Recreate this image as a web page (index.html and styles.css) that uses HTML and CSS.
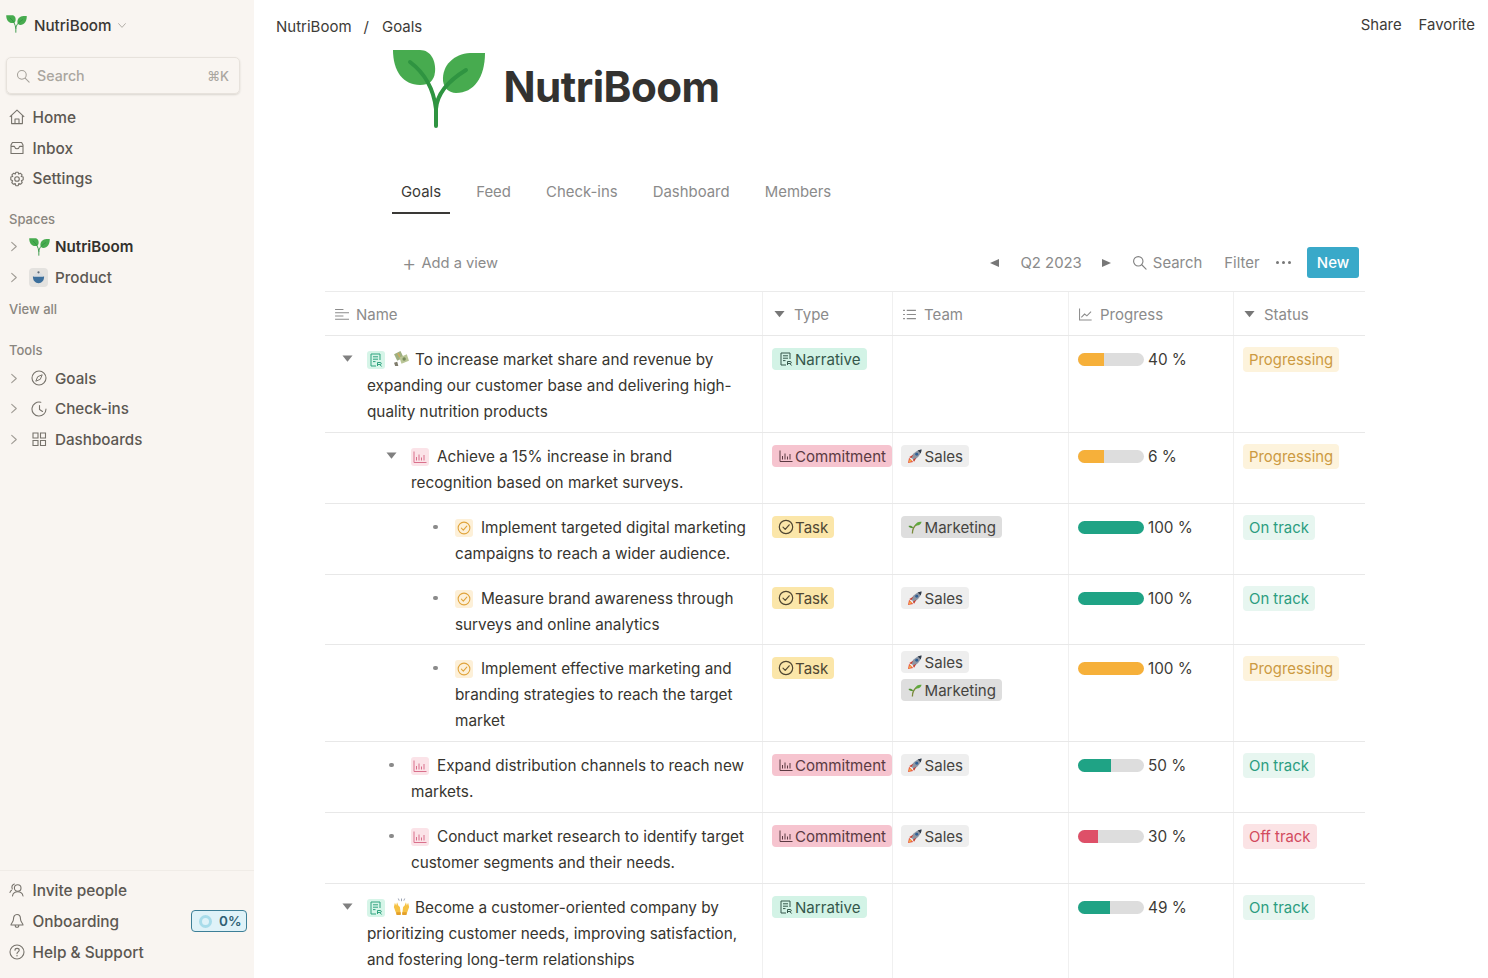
FILE: index.html
```html
<!DOCTYPE html>
<html lang="en">
<head>
<meta charset="utf-8">
<title>NutriBoom Goals</title>
<link rel="stylesheet" href="styles.css">
</head>
<body>
<svg class="defs" aria-hidden="true">
  <symbol id="logo" viewBox="0 0 94 80">
    <path fill="#47ab4f" d="M1 1H28C39 1 44 12 43 23C42 32 37 36 28 36C11 36 1 22 1 1Z"/>
    <path fill="#47ab4f" d="M93 4C93 28 82 44 64 44C57 44 52 39 51 32C50 16 62 5 78 4Z"/>
    <path fill="none" stroke="#2f9441" stroke-width="4" stroke-linecap="round" d="M44 77V60C42 43 34 25 18 13M44 60C45 44 56 32 74 21"/>
  </symbol>
  <symbol id="search" viewBox="0 0 16 16"><circle cx="6.7" cy="6.7" r="5" fill="none" stroke="currentColor" stroke-width="1.2"/><path d="M10.4 10.4L15 15" stroke="currentColor" stroke-width="1.2" stroke-linecap="round"/></symbol>
  <symbol id="home" viewBox="0 0 16 16"><path fill="none" stroke="currentColor" stroke-width="1.1" stroke-linejoin="round" d="M.8 7.8L8 1.2l7.2 6.6M2.6 6.4V14.6H13.4V6.4M6 14.6V10H10V14.6"/></symbol>
  <symbol id="inbox" viewBox="0 0 16 16"><path fill="none" stroke="currentColor" stroke-width="1.1" stroke-linejoin="round" d="M3.4 2.5H12.6L14 5V13.5H2V5ZM2 6.4H5.4C5.8 8 6.8 8.8 8 8.8S10.200 8 10.600 6.4H14"/></symbol>
  <symbol id="gear" viewBox="0 0 16 16"><circle cx="8" cy="8" r="2.300" fill="none" stroke="currentColor" stroke-width="1.100"/><path fill="none" stroke="currentColor" stroke-width="1.100" stroke-linejoin="round" d="M6.800 1.300H9.200L9.700 3.100L11.300 2.200L13.100 3.900L12.200 5.500L14.200 6V8.700L12.400 9.700L13.200 11.500L11.500 13.300L9.800 12.500L9.200 14.700H6.800L6.200 12.500L4.500 13.300L2.800 11.500L3.600 9.700L1.800 8.700V6L3.800 5.500L2.900 3.900L4.700 2.200L6.300 3.100Z"/></symbol>
  <symbol id="chev" viewBox="0 0 8 12"><path fill="none" stroke="currentColor" stroke-width="1.200" stroke-linecap="round" stroke-linejoin="round" d="M1.500 1.500L6.500 6L1.500 10.500"/></symbol>
  <symbol id="compass" viewBox="0 0 16 16"><circle cx="8" cy="8" r="7" fill="none" stroke="currentColor" stroke-width="1.100"/><path fill="none" stroke="currentColor" stroke-width="1" stroke-linejoin="round" d="M11.200 4.800L9.300 9.300L4.800 11.200L6.700 6.700Z"/></symbol>
  <symbol id="clock" viewBox="0 0 16 16"><path fill="none" stroke="currentColor" stroke-width="1.100" stroke-linecap="round" d="M9.800 1.300A7 7 0 1 0 15 8M8.500 4.500V8.500L11.500 10.500"/></symbol>
  <symbol id="grid" viewBox="0 0 16 16"><path fill="none" stroke="currentColor" stroke-width="1.100" d="M2 2H7V7H2ZM9.500 2H14.500V7H9.500ZM2 9.500H7V14.500H2ZM9.500 9.500H14.500V14.500H9.500Z"/></symbol>
  <symbol id="people" viewBox="0 0 16 16"><circle cx="8.700" cy="6" r="3.300" fill="none" stroke="currentColor" stroke-width="1.100"/><path fill="none" stroke="currentColor" stroke-width="1.100" stroke-linecap="round" d="M3.500 14C4 11 6 9.800 8.700 9.800S13.400 11 14 14M5.300 2C3 3 2.500 5 3.300 7M1 10.500C1.200 9.500 1.800 8.800 2.500 8.300"/></symbol>
  <symbol id="bell" viewBox="0 0 16 16"><path fill="none" stroke="currentColor" stroke-width="1.100" stroke-linejoin="round" d="M8 1.500C10.500 1.500 11.500 3.500 11.500 6C11.500 9 14 10.500 14 12H2C2 10.500 4.500 9 4.500 6C4.500 3.500 5.500 1.500 8 1.500ZM6.200 12.200C6.200 15 9.800 15 9.800 12.200"/></symbol>
  <symbol id="help" viewBox="0 0 16 16"><circle cx="8" cy="8" r="7" fill="none" stroke="currentColor" stroke-width="1.100"/><path fill="none" stroke="currentColor" stroke-width="1.100" stroke-linecap="round" d="M6 6.200C6 3.800 10.200 3.800 10.200 6.200C10.200 7.900 8 7.800 8 9.600"/><circle cx="8" cy="11.700" r=".7" fill="currentColor"/></symbol>
  <symbol id="lines" viewBox="0 0 16 14"><path stroke="currentColor" stroke-width="1.100" d="M0 1.500H9M0 5H15M0 8.500H9M0 12H15"/></symbol>
  <symbol id="list" viewBox="0 0 14 12"><path stroke="currentColor" stroke-width="1.100" d="M0 1.500H2M4 1.500H14M0 6H2M4 6H14M0 10.500H2M4 10.500H14"/></symbol>
  <symbol id="graph" viewBox="0 0 14 14"><path fill="none" stroke="currentColor" stroke-width="1.100" d="M.6 .6V13H13.600M2.500 10L6 6.500L8.500 8.500L13 4"/></symbol>
  <symbol id="down" viewBox="0 0 12 8"><path fill="currentColor" d="M.5 .8H11.500L6 7.500Z"/></symbol>
  <symbol id="doc" viewBox="0 0 14 14"><path fill="none" stroke="currentColor" stroke-width="1" d="M2 1H11V7M2 1V13H7M4 3.800H9M4 6.200H9M4 8.600H6.500"/><path fill="none" stroke="currentColor" stroke-width="1" d="M8.500 13V9.500H11.200C12.700 9.500 12.700 11.500 11.200 11.500H8.500M10.800 11.500L12.600 13.500"/></symbol>
  <symbol id="bars" viewBox="0 0 14 14"><path fill="none" stroke="currentColor" stroke-width="1" d="M1 1.500V12.500H13.500M3.500 10.500V7M6 10.500V4.500M8.500 10.500V7.500M11 10.500V5"/></symbol>
  <symbol id="check" viewBox="0 0 16 16"><circle cx="8" cy="8" r="6.700" fill="none" stroke="currentColor" stroke-width="1.200"/><path fill="none" stroke="currentColor" stroke-width="1.200" stroke-linecap="round" stroke-linejoin="round" d="M5 8.200L7.200 10.400L11.200 5.800"/></symbol>
  <symbol id="rocket" viewBox="0 0 16 16"><path fill="#e8503f" d="M0 16L1.200 10L6 14.800Z"/><path fill="#f5b041" d="M.6 15.400L2.200 11.500L4.500 13.800Z"/><path fill="#8d95a3" d="M3.500 9.500C5.500 5 10 1.200 15.500 .5C14.800 6 11 10.500 6.500 12.500Z"/><path fill="#2f3947" d="M10.800 1.800C12 2.500 13.800 4.200 14.500 5.200C15 3.600 15.400 2 15.500 .5C14 .7 12.300 1.100 10.800 1.800Z"/><circle cx="10" cy="6" r="1.700" fill="#2f5f94"/><path fill="#c93b2e" d="M1.500 9L6 6.500L3.800 10.500ZM7 14.500L9.500 10L5.500 12.200Z"/></symbol>
  <symbol id="sprout" viewBox="0 0 16 16"><path fill="none" stroke="#7a8a3a" stroke-width="1.500" d="M5 15.500C5 10 7 7 10 5"/><path fill="#5fa83c" d="M8 6C9.500 2.500 12.500 1.500 15.500 2C15 5 12 7 8 6Z"/><path fill="#4f9432" d="M6 8.500C4.500 6.500 2.500 6 .5 6.800C1.500 8.800 3.800 9.800 6 8.500Z"/></symbol>
  <symbol id="money" viewBox="0 0 16 16"><path fill="#9fb080" d="M1 4L7 1L10 7L4 10Z"/><path fill="#b9c596" d="M6 7L13 4L15 10L8 13Z"/><circle cx="10.500" cy="8.500" r="1.600" fill="#75895a"/><path fill="#d6ab5a" d="M5 2.500L7 6.500L6 7L4 3Z"/><path fill="#7f7c6c" d="M1 12L4 11L5 15L2 15Z"/></symbol>
  <symbol id="hands" viewBox="0 0 16 16"><path fill="#f6c244" d="M.8 8.500L1.800 4.500L3 7L3.800 4L5 7L6.500 8.500L7.300 15H3.200Z"/><path fill="#f6c244" d="M15.200 8.500L14.200 4.500L13 7L12.200 4L11 7L9.500 8.500L8.700 15H12.800Z"/><path fill="#e39f2a" d="M3.200 13.500H7.300V16H3.200ZM8.700 13.500H12.800V16H8.700Z"/><path stroke="#8a94a6" stroke-width=".8" d="M8 .5V3M5 .5L5.800 2.500M11 .5L10.200 2.500"/></symbol>
  <symbol id="box" viewBox="0 0 16 16"><path fill="#3c6f9c" d="M2 7H14C14 11.500 11.500 14 8 14S2 11.500 2 7Z"/><path fill="#d9dde1" d="M3 7C3 4.500 5 3 8 3S13 4.500 13 7Z"/><circle cx="8" cy="2.500" r="1.200" fill="#5d6a78"/></symbol>
</svg>

<div class="app">
  <aside class="sidebar">
    <div class="side-top">
      <div class="workspace">
        <svg class="ws-logo"><use href="#logo"/></svg>
        <span class="ws-name">NutriBoom</span>
        <svg class="ws-chev"><use href="#chev"/></svg>
      </div>
      <div class="side-search">
        <svg class="ss-ic"><use href="#search"/></svg>
        <span class="ss-text">Search</span>
        <span class="ss-key">⌘K</span>
      </div>
      <nav class="nav">
        <div class="nav-item"><svg class="nav-ic"><use href="#home"/></svg>Home</div>
        <div class="nav-item"><svg class="nav-ic"><use href="#inbox"/></svg>Inbox</div>
        <div class="nav-item"><svg class="nav-ic"><use href="#gear"/></svg>Settings</div>
      </nav>
      <div class="side-label label-spaces">Spaces</div>
      <div class="tree-item tree-strong"><svg class="tree-chev"><use href="#chev"/></svg><svg class="tree-logo"><use href="#logo"/></svg>NutriBoom</div>
      <div class="tree-item"><svg class="tree-chev"><use href="#chev"/></svg><span class="tree-box"><svg class="tree-box-ic"><use href="#box"/></svg></span>Product</div>
      <div class="side-label label-view">View all</div>
      <div class="side-label label-tools">Tools</div>
      <div class="tree-item"><svg class="tree-chev"><use href="#chev"/></svg><span class="tree-slot"><svg class="tree-ic"><use href="#compass"/></svg></span>Goals</div>
      <div class="tree-item"><svg class="tree-chev"><use href="#chev"/></svg><span class="tree-slot"><svg class="tree-ic"><use href="#clock"/></svg></span>Check-ins</div>
      <div class="tree-item"><svg class="tree-chev"><use href="#chev"/></svg><span class="tree-slot"><svg class="tree-ic"><use href="#grid"/></svg></span>Dashboards</div>
    </div>
    <div class="side-bottom">
      <div class="nav-item"><svg class="nav-ic"><use href="#people"/></svg>Invite people</div>
      <div class="nav-item"><svg class="nav-ic"><use href="#bell"/></svg>Onboarding<span class="onboard"><span class="ring"></span>0%</span></div>
      <div class="nav-item"><svg class="nav-ic"><use href="#help"/></svg>Help &amp; Support</div>
    </div>
  </aside>

  <main class="main">
    <header class="topbar">
      <div class="crumbs"><span>NutriBoom</span><span class="crumb-sep">/</span><span>Goals</span></div>
      <div class="top-actions"><span>Share</span><span>Favorite</span></div>
    </header>

    <div class="hero">
      <svg class="hero-logo"><use href="#logo"/></svg>
      <h1 class="hero-title">NutriBoom</h1>
    </div>

    <div class="tabs">
      <span class="tab tab-active">Goals</span>
      <span class="tab">Feed</span>
      <span class="tab">Check-ins</span>
      <span class="tab">Dashboard</span>
      <span class="tab">Members</span>
    </div>

    <div class="toolbar">
      <div class="add-view"><span class="plus">+</span>Add a view</div>
      <div class="tools">
        <span class="arrow arrow-l"></span>
        <span class="quarter">Q2 2023</span>
        <span class="arrow arrow-r"></span>
        <span class="tool-search"><svg class="tool-ic"><use href="#search"/></svg>Search</span>
        <span class="tool-filter">Filter</span>
        <span class="dots"><i></i><i></i><i></i></span>
        <button class="btn-new">New</button>
      </div>
    </div>

    <section class="table">
      <div class="row head">
        <div class="cell hcell"><svg class="h-lines"><use href="#lines"/></svg>Name</div>
        <div class="cell hcell hcell-type"><svg class="h-down"><use href="#down"/></svg>Type</div>
        <div class="cell hcell hcell-team"><svg class="h-list"><use href="#list"/></svg>Team</div>
        <div class="cell hcell hcell-prog"><svg class="h-graph"><use href="#graph"/></svg>Progress</div>
        <div class="cell hcell hcell-status"><svg class="h-down"><use href="#down"/></svg>Status</div>
      </div>

      <div class="row">
        <div class="cell name lvl0"><span class="tog"><svg class="tog-ic"><use href="#down"/></svg></span><div class="ntext"><span class="ni ni-green"><svg><use href="#doc"/></svg></span><svg class="emo"><use href="#money"/></svg>To increase market share and revenue by expanding our customer base and delivering high-quality nutrition products</div></div>
        <div class="cell tc"><span class="tag t-narr"><svg class="tag-ic"><use href="#doc"/></svg>Narrative</span></div>
        <div class="cell tm"></div>
        <div class="cell pr"><span class="bar"><span class="fill f-orange" style="width:40%"></span></span>40 %</div>
        <div class="cell st"><span class="tag s-prog">Progressing</span></div>
      </div>

      <div class="row">
        <div class="cell name lvl1"><span class="tog"><svg class="tog-ic"><use href="#down"/></svg></span><div class="ntext"><span class="ni ni-pink"><svg><use href="#bars"/></svg></span>Achieve a 15% increase in brand recognition based on market surveys.</div></div>
        <div class="cell tc"><span class="tag t-comm"><svg class="tag-ic"><use href="#bars"/></svg>Commitment</span></div>
        <div class="cell tm"><span class="tag t-sales"><svg class="tag-emo"><use href="#rocket"/></svg>Sales</span></div>
        <div class="cell pr"><span class="bar"><span class="fill f-orange" style="width:40%"></span></span>6 %</div>
        <div class="cell st"><span class="tag s-prog">Progressing</span></div>
      </div>

      <div class="row">
        <div class="cell name lvl2"><span class="tog"><i class="bullet"></i></span><div class="ntext"><span class="ni ni-orange"><svg><use href="#check"/></svg></span>Implement targeted digital marketing campaigns to reach a wider audience.</div></div>
        <div class="cell tc"><span class="tag t-task"><svg class="tag-ic tag-ic-check"><use href="#check"/></svg>Task</span></div>
        <div class="cell tm"><span class="tag t-mark"><svg class="tag-emo"><use href="#sprout"/></svg>Marketing</span></div>
        <div class="cell pr"><span class="bar"><span class="fill f-teal" style="width:100%"></span></span>100 %</div>
        <div class="cell st"><span class="tag s-ok">On track</span></div>
      </div>

      <div class="row row-short">
        <div class="cell name lvl2"><span class="tog"><i class="bullet"></i></span><div class="ntext"><span class="ni ni-orange"><svg><use href="#check"/></svg></span>Measure brand awareness through surveys and online analytics</div></div>
        <div class="cell tc"><span class="tag t-task"><svg class="tag-ic tag-ic-check"><use href="#check"/></svg>Task</span></div>
        <div class="cell tm"><span class="tag t-sales"><svg class="tag-emo"><use href="#rocket"/></svg>Sales</span></div>
        <div class="cell pr"><span class="bar"><span class="fill f-teal" style="width:100%"></span></span>100 %</div>
        <div class="cell st"><span class="tag s-ok">On track</span></div>
      </div>

      <div class="row">
        <div class="cell name lvl2"><span class="tog"><i class="bullet"></i></span><div class="ntext"><span class="ni ni-orange"><svg><use href="#check"/></svg></span>Implement effective marketing and branding strategies to reach the target market</div></div>
        <div class="cell tc"><span class="tag t-task"><svg class="tag-ic tag-ic-check"><use href="#check"/></svg>Task</span></div>
        <div class="cell tm tm-stack"><span class="tag t-sales"><svg class="tag-emo"><use href="#rocket"/></svg>Sales</span><span class="tag t-mark"><svg class="tag-emo"><use href="#sprout"/></svg>Marketing</span></div>
        <div class="cell pr"><span class="bar"><span class="fill f-orange" style="width:100%"></span></span>100 %</div>
        <div class="cell st"><span class="tag s-prog">Progressing</span></div>
      </div>

      <div class="row">
        <div class="cell name lvl1"><span class="tog"><i class="bullet"></i></span><div class="ntext"><span class="ni ni-pink"><svg><use href="#bars"/></svg></span>Expand distribution channels to reach new markets.</div></div>
        <div class="cell tc"><span class="tag t-comm"><svg class="tag-ic"><use href="#bars"/></svg>Commitment</span></div>
        <div class="cell tm"><span class="tag t-sales"><svg class="tag-emo"><use href="#rocket"/></svg>Sales</span></div>
        <div class="cell pr"><span class="bar"><span class="fill f-teal" style="width:50%"></span></span>50 %</div>
        <div class="cell st"><span class="tag s-ok">On track</span></div>
      </div>

      <div class="row">
        <div class="cell name lvl1"><span class="tog"><i class="bullet"></i></span><div class="ntext"><span class="ni ni-pink"><svg><use href="#bars"/></svg></span>Conduct market research to identify target customer segments and their needs.</div></div>
        <div class="cell tc"><span class="tag t-comm"><svg class="tag-ic"><use href="#bars"/></svg>Commitment</span></div>
        <div class="cell tm"><span class="tag t-sales"><svg class="tag-emo"><use href="#rocket"/></svg>Sales</span></div>
        <div class="cell pr"><span class="bar"><span class="fill f-red" style="width:30%"></span></span>30 %</div>
        <div class="cell st"><span class="tag s-off">Off track</span></div>
      </div>

      <div class="row">
        <div class="cell name lvl0"><span class="tog"><svg class="tog-ic"><use href="#down"/></svg></span><div class="ntext"><span class="ni ni-green"><svg><use href="#doc"/></svg></span><svg class="emo"><use href="#hands"/></svg>Become a customer-oriented company by prioritizing customer needs, improving satisfaction, and fostering long-term relationships</div></div>
        <div class="cell tc"><span class="tag t-narr"><svg class="tag-ic"><use href="#doc"/></svg>Narrative</span></div>
        <div class="cell tm"></div>
        <div class="cell pr"><span class="bar"><span class="fill f-teal" style="width:49%"></span></span>49 %</div>
        <div class="cell st"><span class="tag s-ok">On track</span></div>
      </div>
    </section>
  </main>
</div>
</body>
</html>
```
FILE: styles.css
```css
* { box-sizing: border-box; }
html, body { margin: 0; height: 100%; }
body {
  font-family: Inter, "Liberation Sans", sans-serif;
  color: #37352f;
  background: #fff;
  overflow: hidden;
}
.defs { width: 0; height: 0; display: block; }
.app { display: flex; height: 978px; overflow: hidden; }

/* sidebar */
.sidebar {
  width: 254px;
  flex: none;
  background: #f9f5f1;
  display: flex;
  flex-direction: column;
  justify-content: space-between;
  color: #5c5852;
  font-size: 15.2px;
  font-weight: 500;
}
.workspace { display: flex; align-items: center; height: 50px; padding-left: 6px; }
.ws-logo { width: 21px; height: 18px; margin-top: -2px; }
.ws-name { margin-left: 7px; color: #3a3834; font-size: 15.2px; font-weight: 500; }
.ws-chev { width: 6px; height: 9px; margin-left: 7px; color: #aaa69f; transform: rotate(90deg); }
.side-search {
  margin: 7px 14px 0 6px;
  height: 37px;
  display: flex;
  align-items: center;
  padding: 0 10px 0 9px;
  border: 1px solid #e7e2dc;
  border-radius: 5px;
  box-shadow: 0 1px 2px rgba(80, 70, 60, .18);
  color: #aaa69f;
}
.ss-ic { width: 14px; height: 14px; color: #a5a19a; }
.ss-text { margin-left: 7px; font-size: 14.2px; }
.ss-key { margin-left: auto; font-size: 13px; }
.nav { margin-top: 8px; }
.nav-item { display: flex; align-items: center; height: 30.8px; padding-left: 9px; font-size: 15.4px; }
.nav-ic { width: 16px; height: 16px; margin-right: 7.5px; color: #77736c; flex: none; }
.side-label { padding-left: 9px; font-size: 13px; color: #8a867f; }
.label-spaces { margin-top: 15px; height: 22px; line-height: 21px; }
.label-view { margin-top: 6px; height: 21px; line-height: 21px; }
.label-tools { margin-top: 20px; height: 23px; line-height: 21px; }
.tree-item { display: flex; align-items: center; height: 30.7px; padding-left: 10px; }
.tree-strong { color: #33312d; font-weight: 600; }
.tree-chev { width: 8px; height: 11px; color: #a09c95; margin-right: 11px; }
.tree-logo { width: 21px; height: 18px; margin-right: 5px; }
.tree-box { width: 19px; height: 19px; margin-right: 7px; background: #e4e2df; border-radius: 4px; display: flex; align-items: center; justify-content: center; }
.tree-box-ic { width: 15px; height: 15px; }
.tree-slot { width: 19px; display: flex; justify-content: center; margin-right: 7px; }
.tree-ic { width: 16px; height: 16px; color: #77736c; }
.side-bottom { border-top: 1px solid #f0ece7; padding: 4px 0 10.5px; }
.side-bottom .nav-item { height: 31px; }
.onboard {
  margin-left: auto;
  margin-right: 7px;
  width: 56px;
  height: 22px;
  display: flex;
  align-items: center;
  gap: 7px;
  padding-left: 7px;
  background: #dff2f8;
  border: 1px solid #3d7f97;
  border-radius: 4px;
  color: #2f5f73;
  font-size: 13.5px;
  font-weight: 600;
}
.ring { width: 13px; height: 13px; border-radius: 50%; border: 3.5px solid #a8dcea; }

/* main */
.main { flex: 1; min-width: 0; }
.topbar {
  display: flex;
  justify-content: space-between;
  align-items: center;
  height: 49px;
  padding: 3px 13px 0 22px;
  font-size: 15px;
  color: #3d3b37;
}
.crumbs { display: flex; gap: 10px; }
.crumb-sep { margin: 0 3px 0 2px; }
.top-actions { display: flex; gap: 17px; margin-top: -2px; font-size: 14.9px; }
.hero { display: flex; align-items: flex-start; margin-left: 138px; height: 79px; }
.hero-logo { width: 94px; height: 80px; flex: none; }
.hero-title {
  margin: 11px 0 0 17.5px;
  font-size: 42.2px;
  line-height: 54px;
  font-weight: 700;
  color: #333230;
  letter-spacing: -.55px;
}
.tabs { display: flex; margin: 50px 0 0 138px; height: 36px; font-size: 14.9px; color: #8b8b8b; }
.tab { padding: 0 9px; margin-right: 17.2px; height: 36px; line-height: 28px; }
.tab-active { color: #3a3936; border-bottom: 2px solid #3a3936; }
.toolbar { display: flex; align-items: center; justify-content: space-between; margin: 33px 0 0 148px; width: 957px; height: 31px; font-size: 14.9px; color: #8b8b8b; }
.add-view { display: flex; align-items: center; font-size: 14.7px; }
.plus { font-size: 22px; font-weight: 300; margin-right: 5px; line-height: 20px; }
.tools { display: flex; align-items: center; }
.arrow { width: 0; height: 0; border-top: 4.5px solid transparent; border-bottom: 4.5px solid transparent; }
.arrow-l { border-right: 9px solid #777; }
.arrow-r { border-left: 9px solid #777; margin-left: 20px; }
.quarter { margin-left: 21px; }
.tool-search { display: flex; align-items: center; margin-left: 21px; }
.tool-ic { width: 15px; height: 15px; margin-right: 6px; color: #808080; }
.tool-filter { margin-left: 22px; }
.dots { display: flex; gap: 2.5px; margin-left: 16px; }
.dots i { width: 3.5px; height: 3.5px; border-radius: 50%; background: #777; }
.btn-new {
  margin-left: 16px;
  width: 52px;
  height: 31px;
  border: 0;
  border-radius: 3px;
  background: #39a9c9;
  color: #fff;
  font: 500 15px Inter, "Liberation Sans", sans-serif;
}

/* table */
.table { margin: 13px 0 0 71px; width: 1040px; border-top: 1px solid #ebebeb; font-size: 15.3px; }
.row {
  display: grid;
  grid-template-columns: 438px 130px 176px 165px 131px;
  border-bottom: 1px solid #e8e8e8;
}
.cell { border-right: 1px solid #f0f0f0; }
.cell:last-child { border-right: 0; }
.head { height: 44px; }
.hcell { display: flex; align-items: center; padding: 1px 0 0 10px; color: #8b8b8b; font-size: 15px; }
.h-lines { width: 15px; height: 13px; margin-right: 6px; color: #8b8b8b; }
.h-down { width: 11px; height: 8px; margin-right: 9px; color: #777; }
.h-list { width: 13px; height: 11px; margin-right: 8px; color: #8b8b8b; }
.h-graph { width: 13px; height: 13px; margin-right: 8px; color: #8b8b8b; }
.hcell-type { padding-left: 11px; }

.name { display: flex; padding: 11px 12px 7px 0; line-height: 26px; color: #37352f; }
.row-short .name { padding-bottom: 6px; }
.lvl0 { padding-left: 16px; }
.lvl1 { padding-left: 60px; }
.lvl2 { padding-left: 104px; }
.tog { width: 26px; flex: none; height: 26px; display: flex; align-items: center; }
.tog-ic { width: 11px; height: 9px; color: #808080; margin-left: 1px; margin-top: -3px; }
.bullet { width: 4.5px; height: 4.5px; margin-left: 4px; margin-top: -2px; border-radius: 50%; background: #8a8a8a; }
.ntext { flex: 1; min-width: 0; }
.ni {
  display: inline-flex;
  align-items: center;
  justify-content: center;
  width: 18px;
  height: 18px;
  margin-right: 8px;
  border-radius: 3px;
  vertical-align: -2px;
}
.ni svg { width: 14px; height: 14px; }
.ni-green { background: #d6f5e8; color: #2fa37e; }
.ni-pink { background: #fbe3e8; color: #d9708c; }
.ni-orange { background: #fdf0d8; color: #e0a33a; }
.emo { width: 17px; height: 17px; margin-right: 5px; vertical-align: -2px; }

.tc { padding: 12px 0 0 9px; }
.st { padding: 11px 0 0 9px; }
.tm { padding: 12px 0 0 8px; }
.tm-stack { padding-top: 6px; display: flex; flex-direction: column; align-items: flex-start; gap: 6px; }
.pr { display: flex; align-items: flex-start; gap: 4px; padding: 14px 0 0 9px; line-height: 20px; color: #3d3b37; }
.tag {
  display: inline-flex;
  align-items: center;
  height: 22px;
  padding: 0 6px 0 7px;
  border-radius: 4px;
  font-size: 15.1px;
  white-space: nowrap;
}
.tag-ic { width: 14px; height: 14px; margin-right: 2px; }
.tag-ic-check { width: 16px; height: 16px; margin: 0 1px 0 -1px; }
.tag-emo { width: 14px; height: 14px; margin-right: 2.5px; }
.st .tag { height: 25px; padding: 0 6px; font-size: 14.9px; }
.t-narr { background: #d3f3e6; color: #35574b; }
.t-comm { background: #f6c4cf; color: #5b3a42; }
.t-task { background: #fbe6a9; color: #4f4632; }
.t-sales { background: #eeeeee; color: #45443f; }
.t-mark { background: #dedede; color: #45443f; }
.s-prog { background: #fdf3dc; color: #cc9a42; }
.s-ok { background: #e7f6f0; color: #2b9d80; }
.s-off { background: #fbe3e5; color: #d24a5e; }
.bar { width: 66px; height: 13px; margin-top: 3px; flex: none; background: #dddddd; border-radius: 7px; overflow: hidden; }
.fill { display: block; height: 100%; }
.f-orange { background: #f6b03a; }
.f-teal { background: #1fa385; }
.f-red { background: #de5068; }
```
